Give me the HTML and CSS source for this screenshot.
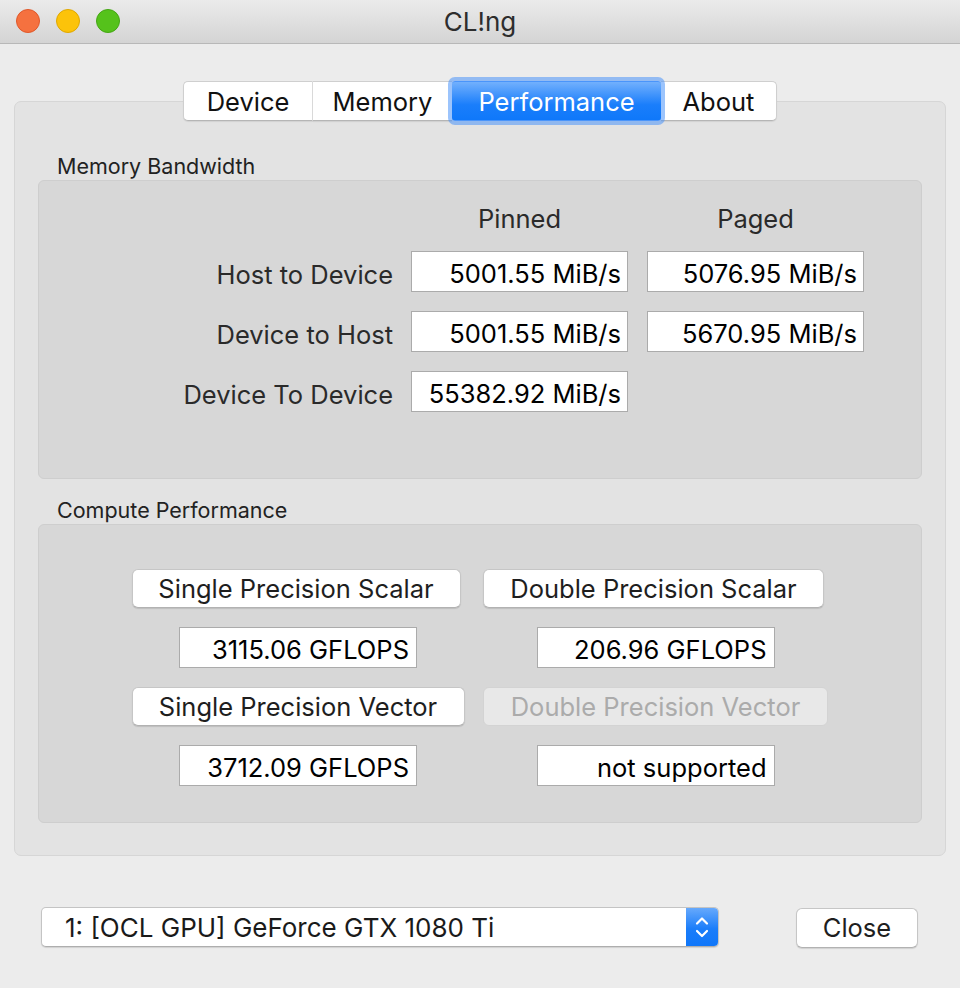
FILE: index.html
```html
<!DOCTYPE html>
<html>
<head>
<meta charset="utf-8">
<link rel="stylesheet" href="styles.css">
</head>
<body>
<div class="window">
  <div class="titlebar">
    <div class="lights">
      <span class="light close"></span>
      <span class="light min"></span>
      <span class="light max"></span>
    </div>
    <div class="title">CL!ng</div>
    <div></div>
  </div>

  <div class="tabwidget">
    <div class="tabbar">
      <div class="tab t-device">Device</div>
      <div class="tab t-memory">Memory</div>
      <div class="tab t-perf active">Performance</div>
      <div class="tab t-about">About</div>
    </div>
    <div class="panel">
      <div class="grouplabel">Memory Bandwidth</div>
      <div class="group bw">
        <div></div>
        <div class="colhead">Pinned</div>
        <div class="colhead">Paged</div>

        <div class="rowlabel">Host to Device</div>
        <div class="field">5001.55 MiB/s</div>
        <div class="field">5076.95 MiB/s</div>

        <div class="rowlabel">Device to Host</div>
        <div class="field">5001.55 MiB/s</div>
        <div class="field">5670.95 MiB/s</div>

        <div class="rowlabel">Device To Device</div>
        <div class="field">55382.92 MiB/s</div>
        <div></div>
      </div>

      <div class="grouplabel second">Compute Performance</div>
      <div class="group compute">
        <div class="btn b-ss">Single Precision Scalar</div>
        <div class="btn b-ds">Double Precision Scalar</div>
        <div class="field wide">3115.06 GFLOPS</div>
        <div class="field wide">206.96 GFLOPS</div>
        <div class="btn b-sv">Single Precision Vector</div>
        <div class="btn b-dv disabled">Double Precision Vector</div>
        <div class="field wide">3712.09 GFLOPS</div>
        <div class="field wide">not supported</div>
      </div>
    </div>
  </div>

  <div class="bottombar">
    <div class="combo">
      <span class="combo-text">1: [OCL GPU] GeForce GTX 1080 Ti</span>
      <span class="stepper">
        <svg width="32" height="38" viewBox="0 0 32 38">
          <path d="M11 15.5 L16 10.5 L21 15.5" fill="none" stroke="#fff" stroke-width="2.2" stroke-linecap="round" stroke-linejoin="round"/>
          <path d="M11 23 L16 28 L21 23" fill="none" stroke="#fff" stroke-width="2.2" stroke-linecap="round" stroke-linejoin="round"/>
        </svg>
      </span>
    </div>
    <div class="btn closebtn">Close</div>
  </div>
</div>
</body>
</html>
```

FILE: styles.css
```css
* { box-sizing: border-box; }

html, body {
  margin: 0;
  padding: 0;
}

body {
  font-family: "Inter", "Liberation Sans", sans-serif;
  color: #262626;
  background: #ececec;
}

.window {
  width: 960px;
  height: 988px;
  background: #ececec;
  overflow: hidden;
}

/* Title bar */
.titlebar {
  height: 44px;
  display: grid;
  grid-template-columns: 1fr auto 1fr;
  align-items: center;
  background: linear-gradient(#ebebeb, #d4d4d4);
  border-bottom: 1px solid #b8b8b8;
}

.lights {
  display: flex;
  gap: 16px;
  padding-left: 16px;
  padding-bottom: 1px;
}

.light {
  width: 24px;
  height: 24px;
  border-radius: 50%;
  display: block;
}
.light.close { background: #f5713f; border: 1px solid #e0582a; }
.light.min { background: #fcc30a; border: 1px solid #e0a800; }
.light.max { background: #55c21b; border: 1px solid #44a614; }

.title {
  font-size: 26px;
  color: #2d2d2d;
  padding-bottom: 1px;
}

/* Tabs */
.tabwidget {
  margin: 37px 14px 0;
}

.tabbar {
  display: flex;
  justify-content: center;
  height: 40px;
  margin-bottom: -20px;
  position: relative;
  z-index: 1;
}

.tab {
  height: 40px;
  background: #fff;
  font-size: 25.5px;
  color: #111;
  display: flex;
  align-items: center;
  justify-content: center;
  border-top: 1px solid #cfcfcf;
  border-bottom: 1px solid #b5b5b5;
  box-shadow: 0 1px 1px rgba(0,0,0,0.08);
}

.t-device {
  width: 130px;
  border-left: 1px solid #cfcfcf;
  border-right: 1px solid #dcdcdc;
  border-radius: 5px 0 0 5px;
}
.t-memory { width: 139px; }
.t-perf { width: 209px; }
.t-about {
  width: 116px;
  border-right: 1px solid #cfcfcf;
  border-radius: 0 5px 5px 0;
}

.tab.active {
  color: #fff;
  background: linear-gradient(#72b0fd, #1a7efb 60%, #0f78fa);
  border-color: #4a95fb;
  box-shadow: 0 0 0 4px rgba(74, 148, 250, 0.55);
  border-radius: 3px;
  position: relative;
  z-index: 1;
}

.panel {
  background: #e3e3e3;
  border: 1px solid #d6d6d6;
  border-radius: 7px;
  padding: 52px 23px 32px;
}

.grouplabel {
  font-size: 21.5px;
  line-height: 24px;
  color: #222;
  padding-left: 19px;
  margin-bottom: 2px;
}
.grouplabel.second {
  margin-top: 19px;
}

.group {
  background: #d7d7d7;
  border: 1px solid #cecece;
  border-radius: 6px;
  height: 299px;
}

/* Memory bandwidth grid */
.group.bw {
  display: grid;
  grid-template-columns: 1fr 217px 217px;
  grid-template-rows: 26px 41px 41px 41px;
  column-gap: 19px;
  row-gap: 19px;
  padding: 25px 57px 0 0;
  align-content: start;
}

.colhead {
  font-size: 25.5px;
  text-align: center;
  line-height: 26px;
  color: #2a2a2a;
}

.rowlabel {
  font-size: 25.5px;
  padding-top: 5px;
  display: flex;
  align-items: center;
  justify-content: flex-end;
  color: #2a2a2a;
  margin-right: -1px;
}

.field {
  background: #fff;
  border: 1px solid #ababab;
  font-size: 25.5px;
  color: #000;
  padding: 3px 6px 0 0;
  height: 41px;
  display: flex;
  align-items: center;
  justify-content: flex-end;
  white-space: nowrap;
}

/* Compute grid */
.group.compute {
  display: grid;
  grid-template-columns: 332px 345px;
  grid-template-rows: 39px 41px 39px 41px;
  column-gap: 19px;
  row-gap: 19px;
  justify-items: center;
  align-content: start;
  padding: 44px 0 0 93px;
}

.field.wide {
  width: 238px;
  padding-right: 7px;
}

.btn {
  height: 39px;
  background: #fff;
  border: 1px solid #c6c6c6;
  border-bottom-color: #b2b2b2;
  border-radius: 6px;
  box-shadow: 0 1px 1px rgba(0,0,0,0.12);
  font-size: 25.5px;
  color: #1e1e1e;
  display: flex;
  align-items: center;
  justify-content: center;
  padding-bottom: 1px;
  white-space: nowrap;
}

.b-ss { width: 329px; margin-right: 4px; }
.b-sv { width: 333px; }
.b-ds { width: 341px; margin-right: 4px; }
.b-dv { width: 345px; }

.btn.disabled {
  background: #e8e8e8;
  border-color: #d3d3d3;
  box-shadow: none;
  color: #ababab;
}

/* Bottom bar */
.bottombar {
  display: flex;
  justify-content: space-between;
  align-items: center;
  padding: 50px 42px 0 41px;
}

.combo {
  width: 678px;
  height: 40px;
  background: #fff;
  border: 1px solid #c4c4c4;
  border-bottom-color: #aeaeae;
  border-radius: 5px;
  box-shadow: 0 1px 1px rgba(0,0,0,0.12);
  display: flex;
  align-items: center;
  justify-content: space-between;
  overflow: hidden;
}

.combo-text {
  font-size: 26px;
  color: #1a1a1a;
  padding-left: 23px;
  padding-top: 1px;
  white-space: nowrap;
}

.stepper {
  width: 32px;
  height: 40px;
  background: linear-gradient(#6aabfc, #1a7dfa 55%, #0f76f9);
  display: flex;
  align-items: center;
  justify-content: center;
  margin-top: -1px;
  margin-bottom: -1px;
}
.stepper svg { display: block; }

.closebtn {
  width: 122px;
  height: 40px;
  margin-top: 2px;
}
```
